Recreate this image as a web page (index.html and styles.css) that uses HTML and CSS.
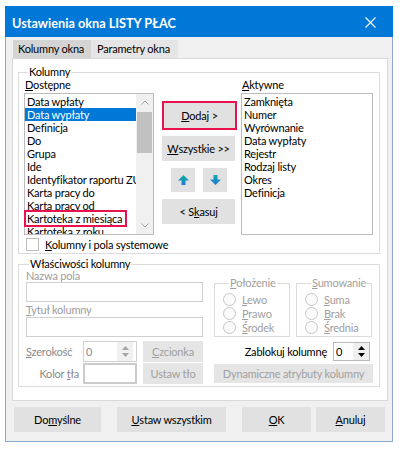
FILE: index.html
```html
<!DOCTYPE html>
<html lang="pl">
<head>
    <meta charset="UTF-8">
    <meta name="viewport" content="width=device-width, initial-scale=1.0">
    <title>Ustawienia okna LISTY PŁAC</title>
    <link rel="stylesheet" href="styles.css">
</head>
<body>
<div class="window">
    <div class="titlebar">
        <span class="title">Ustawienia okna LISTY PŁAC</span>
        <svg class="close" width="11" height="11" viewBox="0 0 11 11">
            <path d="M0.5 0.5L10.5 10.5M10.5 0.5L0.5 10.5" stroke="#fff" stroke-width="1.1" fill="none"/>
        </svg>
    </div>

    <div class="tabs">
        <div class="tab active">Kolumny okna</div>
        <div class="tab second">Parametry okna</div>
    </div>

    <div class="panel">
        <fieldset class="group columns">
            <legend>Kolumny</legend>
            <div class="lists">
                <div class="list-col available">
                    <div class="label"><u>D</u>ostępne</div>
                    <div class="listbox">
                        <ul class="items">
                            <li>Data wpłaty</li>
                            <li class="selected">Data wypłaty</li>
                            <li>Definicja</li>
                            <li>Do</li>
                            <li>Grupa</li>
                            <li>Ide</li>
                            <li>Identyfikator raportu ZUS</li>
                            <li>Karta pracy do</li>
                            <li>Karta pracy od</li>
                            <li><span class="marked">Kartoteka z miesiąca</span></li>
                            <li>Kartoteka z roku</li>
                        </ul>
                        <div class="scrollbar">
                            <div class="sb-btn">
                                <svg width="8" height="5" viewBox="0 0 8 5"><path d="M0.5 4.5L4 1L7.5 4.5" stroke="#a3a3a3" fill="none"/></svg>
                            </div>
                            <div class="sb-track"><div class="sb-thumb"></div></div>
                            <div class="sb-btn">
                                <svg width="8" height="5" viewBox="0 0 8 5"><path d="M0.5 0.5L4 4L7.5 0.5" stroke="#a3a3a3" fill="none"/></svg>
                            </div>
                        </div>
                    </div>
                </div>

                <div class="actions">
                    <div class="marked-btn"><button class="btn"><u>D</u>odaj &gt;</button></div>
                    <button class="btn"><u>W</u>szystkie &gt;&gt;</button>
                    <div class="arrows">
                        <button class="btn arrow">
                            <svg width="11" height="10" viewBox="0 0 11 10">
                                <defs>
                                    <linearGradient id="up" x1="0" y1="0" x2="0" y2="1">
                                        <stop offset="0" stop-color="#10b3a0"/>
                                        <stop offset="1" stop-color="#1f78d6"/>
                                    </linearGradient>
                                </defs>
                                <path d="M5.5 0L11 5.5H7.5V10H3.5V5.5H0Z" fill="url(#up)"/>
                            </svg>
                        </button>
                        <button class="btn arrow">
                            <svg width="11" height="10" viewBox="0 0 11 10">
                                <defs>
                                    <linearGradient id="down" x1="0" y1="0" x2="0" y2="1">
                                        <stop offset="0" stop-color="#17a6ad"/>
                                        <stop offset="1" stop-color="#1f78d6"/>
                                    </linearGradient>
                                </defs>
                                <path d="M5.5 10L11 4.5H7.5V0H3.5V4.5H0Z" fill="url(#down)"/>
                            </svg>
                        </button>
                    </div>
                    <button class="btn">&lt; S<u>k</u>asuj</button>
                </div>

                <div class="list-col active-list">
                    <div class="label"><u>A</u>ktywne</div>
                    <div class="listbox">
                        <ul class="items">
                            <li>Zamknięta</li>
                            <li>Numer</li>
                            <li>Wyrównanie</li>
                            <li>Data wypłaty</li>
                            <li>Rejestr</li>
                            <li>Rodzaj listy</li>
                            <li>Okres</li>
                            <li>Definicja</li>
                        </ul>
                    </div>
                </div>
            </div>
            <label class="check"><span class="box"></span><span><u>K</u>olumny i pola systemowe</span></label>
        </fieldset>

        <fieldset class="group props">
            <legend>Właściwości kolumny</legend>
            <div class="props-grid">
                <div class="props-left">
                    <div class="label dim">Nazwa pola</div>
                    <div class="field"></div>
                    <div class="label dim second-label"><u>T</u>ytuł kolumny</div>
                    <div class="field"></div>
                    <div class="row width-row">
                        <span class="row-label"><span><u>S</u>zerokość</span></span>
                        <div class="spin off">
                            <span>0</span>
                            <span class="spin-btns">
                                <svg width="7" height="4" viewBox="0 0 7 4"><path d="M3.5 0L7 4H0Z" fill="#a6a6a6"/></svg>
                                <svg width="7" height="4" viewBox="0 0 7 4"><path d="M3.5 4L7 0H0Z" fill="#a6a6a6"/></svg>
                            </span>
                        </div>
                        <button class="btn disabled"><u>C</u>zcionka</button>
                    </div>
                    <div class="row color-row">
                        <span class="row-label end"><span>Kolor <u>t</u>ła</span></span>
                        <div class="swatch"></div>
                        <button class="btn disabled">Ustaw tło</button>
                    </div>
                </div>

                <div class="props-right">
                    <div class="radio-groups">
                        <fieldset class="subgroup">
                            <legend><u>P</u>ołożenie</legend>
                            <div class="radio"><span class="circle"></span><span><u>L</u>ewo</span></div>
                            <div class="radio"><span class="circle"></span><span><u>P</u>rawo</span></div>
                            <div class="radio"><span class="circle"></span><span><u>Ś</u>rodek</span></div>
                        </fieldset>
                        <fieldset class="subgroup">
                            <legend><u>S</u>umowanie</legend>
                            <div class="radio"><span class="circle"></span><span><u>S</u>uma</span></div>
                            <div class="radio"><span class="circle"></span><span><u>B</u>rak</span></div>
                            <div class="radio"><span class="circle"></span><span><u>Ś</u>rednia</span></div>
                        </fieldset>
                    </div>
                    <div class="lock-row">
                        <span class="lock-label">Zablokuj kolumnę</span>
                        <div class="spin">
                            <span>0</span>
                            <span class="spin-btns">
                                <svg width="7" height="4" viewBox="0 0 7 4"><path d="M3.5 0L7 4H0Z" fill="#000"/></svg>
                                <svg width="7" height="4" viewBox="0 0 7 4"><path d="M3.5 4L7 0H0Z" fill="#000"/></svg>
                            </span>
                        </div>
                    </div>
                    <button class="btn disabled wide">Dynamiczne atrybuty kolumny</button>
                </div>
            </div>
        </fieldset>
    </div>

    <div class="footer">
        <button class="btn defaults">Do<u>m</u>yślne</button>
        <button class="btn set-all"><u>U</u>staw wszystkim</button>
        <button class="btn ok"><u>O</u>K</button>
        <button class="btn cancel"><u>A</u>nuluj</button>
    </div>
</div>
</body>
</html>
```

FILE: styles.css
```css
* {
    box-sizing: border-box;
}

body {
    margin: 0;
    background-color: #fff;
    font-family: Lato, "Noto Sans", sans-serif;
    font-size: 11px;
    letter-spacing: -0.2px;
    color: #000;
}

ul {
    list-style: none;
    margin: 0;
    padding: 0;
}

.window {
    margin: 6px 0 0 5px;
    width: 388px;
    height: 436px;
    background-color: #f0f0f0;
    border: 1px solid #8ca8d0;
    border-top: none;
    display: flex;
    flex-direction: column;
}

.titlebar {
    height: 31px;
    margin: 0 -1px;
    padding: 2px 17px 0 7px;
    background-color: #0078d7;
    color: #fff;
    display: flex;
    align-items: center;
    justify-content: space-between;
}

.title {
    font-weight: bold;
    font-size: 12.7px;
    letter-spacing: 0;
}

.tabs {
    display: flex;
    margin-top: 3px;
    padding-left: 7px;
    height: 18px;
}

.tab {
    line-height: 18px;
    white-space: nowrap;
    background-color: #e5e5e5;
    padding-left: 6px;
}

.tab.active {
    width: 78px;
    padding-left: 5px;
    background-color: #d4d4d4;
}

.tab.second {
    width: 87px;
}

.panel {
    margin: 0 4px 0 6px;
    height: 343px;
    background-color: #fff;
    border: 1px solid #d9d9d9;
    padding: 7px 7px 0 5px;
}

.group {
    margin: 0;
    min-width: 0;
    border: 1px solid #dcdcdc;
}

.group legend {
    padding: 0 1px;
    line-height: 12px;
}

.columns {
    padding: 0 6px 2px 5px;
}

.columns legend {
    margin-left: 4px;
}

.lists {
    display: flex;
}

.label {
    line-height: 13px;
    margin-bottom: 2px;
    padding-left: 1px;
}

.list-col.available {
    width: 130px;
}

.list-col.active-list {
    width: 132px;
    margin-left: 4px;
}

.listbox {
    height: 142px;
    border: 1px solid #bcbcbc;
    background-color: #fff;
    display: flex;
}

.items {
    flex: 1;
    min-width: 0;
    padding-top: 1px;
    overflow-x: visible;
    overflow-y: clip;
}

.items li {
    line-height: 13px;
    height: 13px;
    padding-left: 2px;
    white-space: nowrap;
}

.items li.selected {
    background-color: #0078d7;
    color: #fff;
}

.marked {
    display: inline-block;
    margin-left: -1px;
    padding: 0 3px 0 1px;
    outline: 2px solid #e8124f;
}

.scrollbar {
    position: relative;
    width: 17px;
    background-color: #f0f0f0;
    display: flex;
    flex-direction: column;
}

.sb-btn {
    height: 17px;
    display: flex;
    align-items: center;
    justify-content: center;
}

.sb-track {
    flex: 1;
    padding: 1px 1px 0;
}

.sb-thumb {
    height: 41px;
    background-color: #c1c1c1;
}

.actions {
    width: 75px;
    margin-left: 8px;
    padding-top: 23px;
    display: flex;
    flex-direction: column;
}

.btn {
    font: inherit;
    letter-spacing: inherit;
    color: #000;
    background-color: #e1e1e1;
    border: none;
    padding: 0;
    margin: 0;
    white-space: nowrap;
    display: flex;
    align-items: center;
    justify-content: center;
    height: 25px;
}

.actions > .btn {
    width: 73px;
}

.marked-btn {
    border: 2px solid #e8124f;
    height: 29px;
}

.marked-btn .btn {
    width: 100%;
    height: 100%;
}

.actions > .btn:nth-child(2) {
    margin-top: 6px;
}

.arrows {
    display: flex;
    gap: 8px;
    padding-left: 9px;
    margin-top: 7px;
}

.btn.arrow {
    width: 24px;
    height: 24px;
}

.arrows + .btn {
    margin-top: 7px;
}

.check {
    display: flex;
    align-items: center;
    gap: 6px;
    margin: 2px 0 0 2px;
    height: 14px;
}

.check .box {
    width: 13px;
    height: 13px;
    border: 1px solid #bdbdbd;
    background-color: #fff;
}

.props {
    margin-top: 4px;
    padding: 0 5px 2px 7px;
}

.props legend {
    margin-left: 3px;
}

.props-grid {
    display: grid;
    grid-template-columns: 177px 159px;
    column-gap: 11px;
}

.dim {
    color: #9d9d9d;
}

.props-left .label {
    line-height: 12px;
    margin: 0;
    padding: 0;
}

.props-left .second-label {
    margin-top: 2px;
}

.field {
    height: 20px;
    border: 1px solid #d0d0d0;
    background-color: #fff;
}

.second-label + .field {
    margin-top: 1px;
}

.row {
    display: flex;
    height: 21px;
}

.width-row {
    margin-top: 4px;
}

.color-row {
    margin-top: 1px;
}

.row-label {
    width: 57px;
    color: #8a8a8a;
    display: flex;
    align-items: center;
}

.row-label.end {
    justify-content: flex-end;
    padding-right: 4px;
}

.spin {
    display: flex;
    align-items: center;
    justify-content: space-between;
    border: 1px solid #b9b9b9;
    background-color: #fff;
    padding-left: 2px;
}

.spin.off {
    width: 54px;
    color: #8a8a8a;
    border-color: #d0d0d0;
}

.spin-btns {
    width: 16px;
    height: 100%;
    background-color: #f0f0f0;
    display: flex;
    flex-direction: column;
    align-items: center;
    justify-content: center;
    gap: 3px;
}

.spin.off .spin-btns {
    margin-right: 3px;
}

.swatch {
    width: 54px;
    height: 21px;
    border: 2px solid #cccccc;
    background-color: #fff;
}

.row .btn {
    width: 60px;
    height: 21px;
    margin-left: 6px;
}

.btn.disabled {
    background-color: #e5e5e5;
    color: #a0a0a0;
}

.props-right {
    margin-top: 6px;
    display: flex;
    flex-direction: column;
}

.radio-groups {
    display: flex;
    gap: 6px;
}

.subgroup {
    width: 76px;
    margin: 0;
    padding: 2px 0 2px 8px;
    border: 1px solid #dcdcdc;
    color: #a0a0a0;
}

.subgroup legend {
    margin-left: 6px;
    padding: 0 1px;
    line-height: 14px;
}

.radio {
    display: flex;
    align-items: center;
    gap: 6px;
    height: 14px;
}

.circle {
    width: 13px;
    height: 13px;
    border-radius: 50%;
    border: 1px solid #c6c6c6;
    background-color: #fbfbfb;
}

.lock-row {
    margin-top: 5px;
    height: 19px;
    padding-right: 3px;
    display: flex;
    justify-content: flex-end;
    gap: 6px;
}

.lock-label {
    display: flex;
    align-items: center;
    white-space: nowrap;
}

.lock-row .spin {
    width: 37px;
}

.btn.wide {
    margin-top: 3px;
    height: 19px;
    width: 159px;
}

.footer {
    display: flex;
    padding: 6px 7px 0 8px;
}

.footer .btn {
    height: 25px;
}

.defaults {
    width: 87px;
}

.set-all {
    width: 109px;
    margin-left: 16px;
}

.ok {
    width: 69px;
    margin-left: auto;
}

.cancel {
    width: 69px;
    margin-left: 5px;
}
```
